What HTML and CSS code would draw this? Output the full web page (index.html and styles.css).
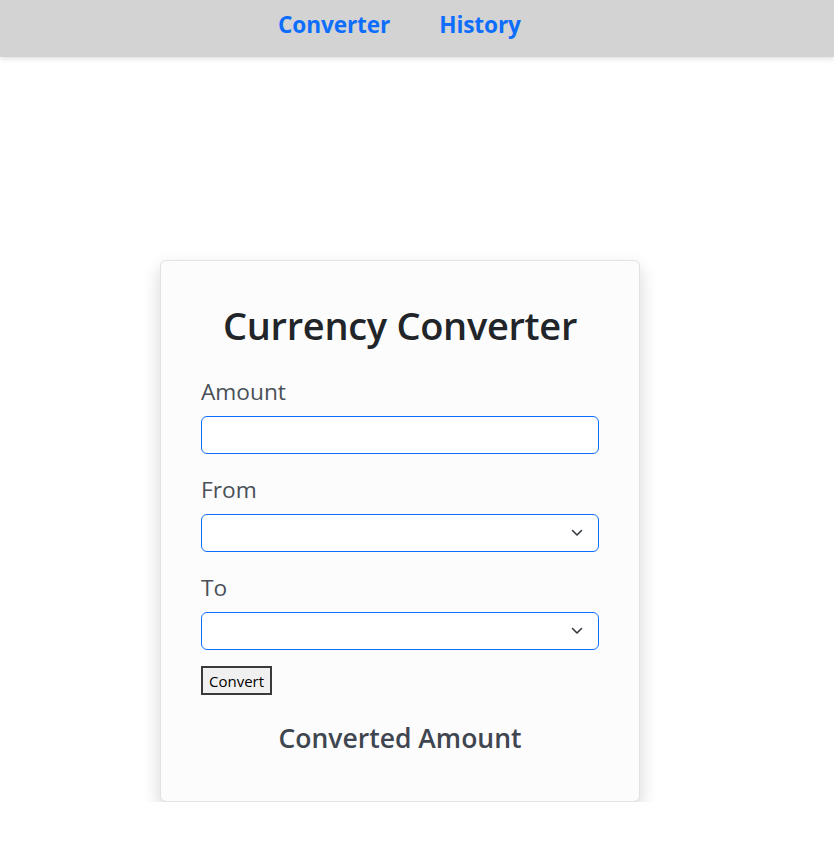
FILE: index.html
```html
<!DOCTYPE html>
<html>
<head>
<meta charset="utf-8">
<link rel="stylesheet" href="styles.css">
</head>
<body>
<nav class="topnav">
  <a class="navlink" href="#">Converter</a>
  <a class="navlink" href="#">History</a>
</nav>
<main class="card">
  <h1 class="title">Currency Converter</h1>
  <div class="field">
    <label class="label">Amount</label>
    <input class="control" type="text">
  </div>
  <div class="field">
    <label class="label">From</label>
    <div class="select-wrap">
      <select class="control select"></select>
      <svg class="chevron" width="12" height="8" viewBox="0 0 12 8"><path d="M1.5 1.5 L6 6 L10.5 1.5" fill="none" stroke="#343a40" stroke-width="1.6" stroke-linecap="round" stroke-linejoin="round"/></svg>
    </div>
  </div>
  <div class="field last">
    <label class="label">To</label>
    <div class="select-wrap">
      <select class="control select"></select>
      <svg class="chevron" width="12" height="8" viewBox="0 0 12 8"><path d="M1.5 1.5 L6 6 L10.5 1.5" fill="none" stroke="#343a40" stroke-width="1.6" stroke-linecap="round" stroke-linejoin="round"/></svg>
    </div>
  </div>
  <button class="btn">Convert</button>
  <h4 class="result">Converted Amount</h4>
</main>
</body>
</html>
```
FILE: styles.css
```css
* { box-sizing: border-box; }
html, body { margin: 0; padding: 0; background: #fff; }
body {
  font-family: "Open Sans", "Noto Sans", sans-serif;
  color: #212529;
}
.topnav {
  height: 57px;
  background: #d3d3d3;
  display: flex;
  align-items: flex-start;
  padding: 13px 0 0 278px;
  gap: 49px;
  box-shadow: 0 2px 5px rgba(0,0,0,0.12);
}
.navlink {
  color: #0d6efd;
  font-weight: 700;
  font-size: 22.6px;
  line-height: 23px;
  text-decoration: none;
  letter-spacing: -0.1px;
}
.card {
  width: 480px;
  margin: 203px 0 0 160px;
  padding: 40px;
  background: #fcfcfc;
  border: 1px solid rgba(0,0,0,0.1);
  border-radius: 6px;
  box-shadow: 0 8px 18px rgba(0,0,0,0.17);
}
.title {
  margin: 0 0 27px;
  font-size: 38px;
  font-weight: 600;
  line-height: 48px;
  text-align: center;
  color: #212529;
  letter-spacing: -0.3px;
}
.field { display: flex; flex-direction: column; gap: 4px; margin-bottom: 20px; }
.field.last { margin-bottom: 16px; }
.label {
  font-size: 22.7px;
  line-height: 36px;
  color: #495057;
  margin-top: -2px;
  margin-bottom: 2px;
}
.control {
  width: 100%;
  height: 38px;
  border: 1px solid #0d6efd;
  border-radius: 6px;
  background: #fff;
  font-family: inherit;
  font-size: 16px;
  outline: none;
}
.select-wrap { position: relative; }
.select { appearance: none; -webkit-appearance: none; }
.chevron { position: absolute; right: 16px; top: 15px; pointer-events: none; }
.btn {
  display: block;
  height: 29px;
  padding: 0 6px;
  font-family: inherit;
  font-size: 15px;
  color: #000;
  background: #f0f0f0;
  border: 2px solid #3a3a3a;
  border-radius: 0;
}
.result {
  margin: 26px 0 6px;
  font-size: 26.5px;
  font-weight: 600;
  line-height: 34px;
  text-align: center;
  color: #3f4650;
}
```
